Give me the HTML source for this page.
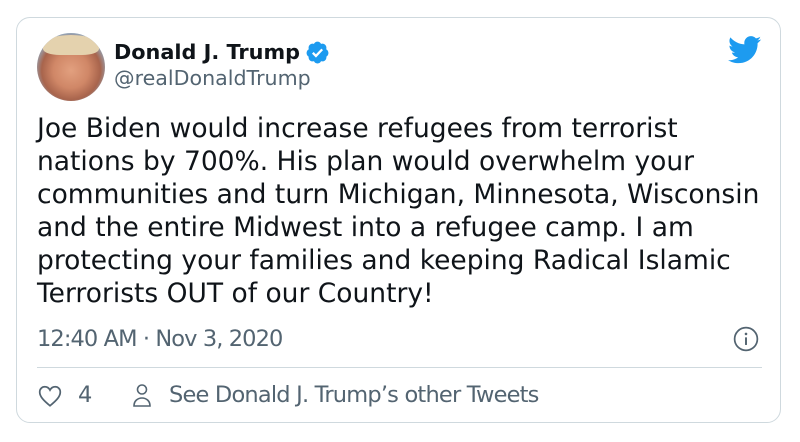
<!DOCTYPE html>
<html><head><meta charset="utf-8"><style>
body{margin:0;width:800px;height:442px;background:#fff;font-family:"DejaVu Sans","Liberation Sans",sans-serif;position:relative;overflow:hidden}
.card{position:absolute;left:16px;top:17px;width:765px;height:406px;border:1px solid #cfd9de;border-radius:14px;box-sizing:border-box}
.av{position:absolute;left:37px;top:33px;width:68px;height:68px;border-radius:50%;background:radial-gradient(circle at 50% 55%,#e2a07f 0,#d08767 35%,#a8644c 58%,#8fb8d6 78%);overflow:hidden}
.av:before{content:"";position:absolute;left:6px;top:2px;width:56px;height:20px;border-radius:50% 50% 30% 30%;background:#e4d2ae}
.name{position:absolute;left:114px;top:40px;font-weight:bold;font-size:20.8px;color:#0f1419}
.handle{position:absolute;left:114px;top:66px;font-size:20.6px;color:#536471}
.txt{position:absolute;left:37px;top:112px;font-size:26.5px;line-height:33px;color:#0f1419;white-space:pre}
.meta{position:absolute;left:37px;top:326px;font-size:22.5px;color:#536471;letter-spacing:-0.9px}
.hr{position:absolute;left:37px;top:367px;width:725px;height:1px;background:#cfd9de}
.foot{position:absolute;top:382px;font-size:22.5px;color:#536471;letter-spacing:-0.8px}
</style></head><body>
<div class="card"></div>
<div class="av"></div>
<div class="name">Donald J. Trump</div>
<svg style="position:absolute;left:305px;top:40px" width="25" height="25" viewBox="0 0 24 24"><path fill="#1d9bf0" d="M22.5 12.5c0-1.58-.88-2.95-2.16-3.6.15-.44.23-.91.23-1.4 0-2.21-1.710-4-3.82-4-.47 0-.92.08-1.34.25C14.82 2.420 13.53 1.5 12 1.5s-2.82.92-3.41 2.25C8.17 3.58 7.72 3.5 7.25 3.5c-2.12 0-3.820 1.79-3.82 4 0 .49.08.96.23 1.4C2.38 9.55 1.5 10.92 1.5 12.5c0 1.5.8 2.8 1.97 3.48-.02.17-.03.34-.03.52 0 2.21 1.71 4 3.82 4 .47 0 .92-.09 1.34-.25.58 1.33 1.870 2.25 3.4 2.25s2.82-.92 3.41-2.25c.42.17.87.25 1.34.25 2.12 0 3.82-1.79 3.82-4 0-.18-.01-.35-.03-.52 1.16-.68 1.96-1.98 1.96-3.48z"/><path fill="none" stroke="#fff" stroke-width="2.2" d="M7.5 12.3l3 3 6-6.3"/></svg>
<div class="handle">@realDonaldTrump</div>
<svg style="position:absolute;left:728px;top:36px" width="34" height="28" viewBox="0 0 24 20"><path fill="#1d9bf0" d="M23.6 2.4c-.9.4-1.8.6-2.8.8 1-.6 1.8-1.6 2.1-2.7-.9.6-2 1-3.1 1.2C18.9.7 17.6.1 16.3.1c-2.7 0-4.8 2.2-4.8 4.8 0 .4 0 .8.1 1.1C7.5 5.8 4 3.9 1.6 1 1.2 1.7.9 2.6.9 3.5c0 1.7.9 3.2 2.2 4-.8 0-1.5-.2-2.2-.6v.1c0 2.3 1.7 4.3 3.9 4.7-.4.1-.8.2-1.3.2-.3 0-.6 0-.9-.1.6 1.9 2.4 3.3 4.5 3.4-1.7 1.3-3.700 2.1-6 2.1-.4 0-.8 0-1.2-.1 2.1 1.4 4.7 2.2 7.4 2.2 8.9 0 13.7-7.4 13.7-13.7v-.6c.9-.7 1.7-1.5 2.4-2.5z"/></svg>
<div class="txt">Joe Biden would increase refugees from terrorist
nations by 700%. His plan would overwhelm your
communities and turn Michigan, Minnesota, Wisconsin
and the entire Midwest into a refugee camp. I am
protecting your families and keeping Radical Islamic
Terrorists OUT of our Country!</div>
<div class="meta">12:40 AM · Nov 3, 2020</div>
<svg style="position:absolute;left:733px;top:326px" width="26" height="26" viewBox="0 0 24 24"><circle cx="12" cy="12" r="10.5" fill="none" stroke="#536471" stroke-width="1.6"/><circle cx="12" cy="7.3" r="1.2" fill="#536471"/><path d="M12 10.5v7" stroke="#536471" stroke-width="1.8"/></svg>
<div class="hr"></div>
<svg style="position:absolute;left:37px;top:383px" width="26" height="26" viewBox="0 0 24 24"><path fill="none" stroke="#536471" stroke-width="1.6" d="M12 21C6 16 2.5 12.5 2.5 8.3 2.5 5.5 4.6 3.5 7.2 3.5c2 0 3.8 1.2 4.8 3 1-1.8 2.8-3 4.8-3 2.6 0 4.7 2 4.7 4.8 0 4.2-3.5 7.7-9.5 12.7z"/></svg>
<div class="foot" style="left:78px">4</div>
<svg style="position:absolute;left:131px;top:383px" width="22" height="26" viewBox="0 0 22 26"><circle cx="11" cy="6.5" r="4.5" fill="none" stroke="#536471" stroke-width="1.6"/><path fill="none" stroke="#536471" stroke-width="1.6" d="M3 23c0-5 3.5-8 8-8s8 3 8 8z"/></svg>
<div class="foot" style="left:169px">See Donald J. Trump’s other Tweets</div>
</body></html>
